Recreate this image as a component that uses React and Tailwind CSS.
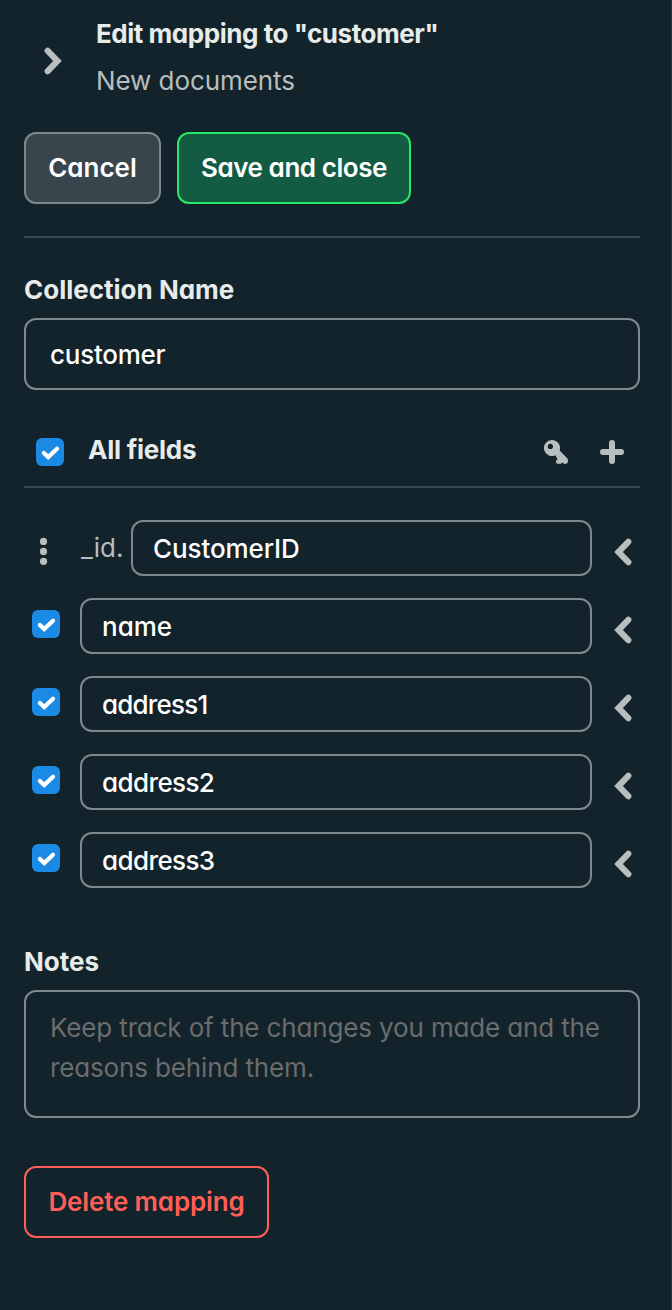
import React from "react";

const FEATURES = "[font-feature-settings:'cv11','ss03']";

function Chevron({ flip }) {
  return (
    <svg width="18" height="28" viewBox="0 0 18 28" fill="none" className={flip ? "block shrink-0 rotate-180" : "block shrink-0"}>
      <path d="M3.7 3.8 L13.5 14 L3.7 24.2" stroke="#b8bebe" strokeWidth="6.2" strokeLinecap="round" strokeLinejoin="miter" />
    </svg>
  );
}

function Checkbox() {
  return (
    <span className="flex size-7 shrink-0 items-center justify-center rounded-[6px] bg-[#1a8ae5]">
      <svg width="28" height="28" viewBox="0 0 28 28" fill="none">
        <path d="M7.9 15 L12.2 19 L21 10.7" stroke="#ffffff" strokeWidth="4.2" strokeLinecap="round" />
      </svg>
    </span>
  );
}

function KeyIcon() {
  return (
    <svg width="24" height="24" viewBox="0 0 24 24" className="block">
      <path fill="#b8bebe" fillRule="evenodd" d="M8 0a8 8 0 0 1 7.6 10.6L23.4 18.6Q24.2 19.6 24 21.8Q23.4 24 21 24Q20 24 19.3 23.3L18.3 22.4L17.2 23.5Q16.4 24.2 15.2 23.8L14 23.8Q12 24 12.1 22V20.6L13.6 19.2L11.4 15.2A8 8 0 1 1 8 0ZM6.4 3.8a2.6 2.6 0 1 0 0 5.2a2.6 2.6 0 0 0 0-5.2Z" />
    </svg>
  );
}

function Field({ value, id, spacing }) {
  return (
    <div className="flex h-14 items-center">
      <div className="flex w-14 shrink-0 pl-2">
        {id ? (
          <svg width="24" height="28" viewBox="0 0 24 28" fill="#b8bebe" className="mt-1.5">
            <circle cx="11.5" cy="4.4" r="3.6" />
            <circle cx="11.5" cy="14.4" r="3.6" />
            <circle cx="11.5" cy="24.3" r="3.6" />
          </svg>
        ) : (
          <div className="-mt-1"><Checkbox /></div>
        )}
      </div>
      {id && <span className="w-[51px] shrink-0 pl-px text-[#b8bebe]">_id.</span>}
      <div className="flex h-14 flex-1 items-center rounded-xl border-2 border-[#7e898c] pl-5 pt-0.5 font-medium text-white">
        <span className={spacing}>{value}</span>
      </div>
      <div className="ml-[22px] mr-2 mt-2"><Chevron flip /></div>
    </div>
  );
}

export default function App() {
  return (
    <div className={`h-[1310px] w-[672px] border-r border-[#26343b] bg-[#12232b] pl-6 pr-[31px] font-['Inter',sans-serif] text-[26px] leading-10 ${FEATURES}`}>
      <header className="flex h-[132px] pt-3.5">
        <div className="ml-5 mt-[33px] w-[52px]"><Chevron /></div>
        <div>
          <h1 className="font-bold tracking-[-0.46px] text-[#e7ebe9]">Edit mapping to "customer"</h1>
          <p className="mt-[7px] tracking-[-0.08px] text-[#b8bebe]">New documents</p>
        </div>
      </header>
      <div className="flex gap-4">
        <button className="h-[72px] w-[137px] rounded-xl border-2 border-[#7e898c] bg-[#38454d] font-semibold text-white">Cancel</button>
        <button className="h-[72px] w-[234px] rounded-xl border-2 border-[#29e866] bg-[#135c43] font-semibold tracking-[-0.43px] text-white">Save and close</button>
      </div>
      <hr className="mt-8 border-t-2 border-[#38474f]" />
      <section className="pt-8">
        <h2 className="font-bold text-[#e7ebe9]">Collection Name</h2>
        <div className="mt-2 flex h-[72px] items-center rounded-xl border-2 border-[#7e898c] pl-6 pt-0.5 font-medium tracking-[-0.25px] text-white">customer</div>
      </section>
      <section>
        <div className="flex h-[98px] items-start border-b-2 border-[#38474f] pt-10 pl-3">
          <div className="mt-2"><Checkbox /></div>
          <h2 className="ml-6 flex-1 font-bold tracking-[-0.25px] text-[#e7ebe9]">All fields</h2>
          <div className="mt-2.5 mr-8"><KeyIcon /></div>
          <svg width="24" height="24" viewBox="0 0 24 24" className="mt-2.5 mr-4"><path d="M12 3v18M3 12h18" stroke="#b8bebe" strokeWidth="6" strokeLinecap="round" /></svg>
        </div>
        <div className="mt-8 flex flex-col gap-[22px]">
          <Field id value="CustomerID" spacing="tracking-[-0.1px]" />
          <Field value="name" spacing="tracking-[0px]" />
          <Field value="address1" spacing="tracking-[-0.8px]" />
          <Field value="address2" spacing="tracking-[-0.6px]" />
          <Field value="address3" spacing="tracking-[-0.6px]" />
        </div>
      </section>
      <section className="pt-[54px]">
        <h2 className="font-bold text-[#e7ebe9]">Notes</h2>
        <div className="mt-2 h-32 rounded-xl border-2 border-[#7e898c] pl-6 pt-4 tracking-[-0.14px] text-[#6c6c6c]">Keep track of the changes you made and the<br />reasons behind them.</div>
      </section>
      <button className="mt-12 h-[72px] w-[245px] rounded-xl border-2 border-[#ff5f56] font-semibold tracking-[-0.15px] text-[#ff5f56]">Delete mapping</button>
    </div>
  );
}
